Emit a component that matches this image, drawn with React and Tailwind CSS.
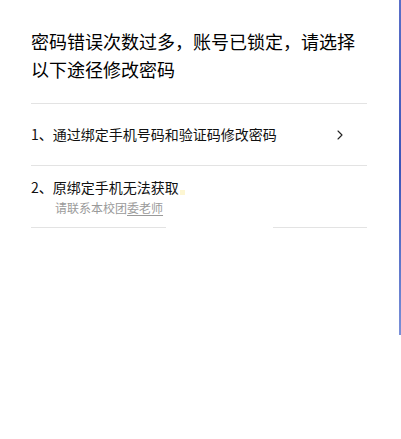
import React from "react";
import { ChevronRight } from "lucide-react";

export default function App() {
  return (
    <div
      className="flex w-[401px] h-[439px] bg-white"
      style={{ fontFamily: '"Microsoft YaHei", "Noto Sans CJK SC", "Noto Sans", sans-serif' }}
    >
      <div className="w-[399px] px-[31px] pr-[32px]">
        {/* Title */}
        <h1 className="pt-[27px] text-[18px] leading-[28px] text-black font-normal">
          密码错误次数过多，账号已锁定，请选择以下途径修改密码
        </h1>

        <div className="mt-[20px] border-t border-[#e3e3e3]" />

        {/* Option 1 */}
        <div className="flex items-center justify-between h-[61px] text-[14px] text-[#111]">
          <span>1、通过绑定手机号码和验证码修改密码</span>
          <ChevronRight size={16} strokeWidth={1.6} className="mr-[19px] text-[#222]" />
        </div>

        <div className="border-t border-[#e3e3e3]" />

        {/* Option 2 */}
        <div className="h-[61px] pt-[11px]">
          <div className="flex items-center text-[14px] leading-[20px] text-[#111]">
            2、原绑定手机无法获取
            <span className="ml-[1px] mt-[10px] w-[5px] h-[5px] bg-[#fdf6d2]" />
          </div>
          <div className="pl-[24px] mt-[2px] text-[12px] leading-[18px] text-[#9a9a9a]">
            请联系本校团<span className="underline underline-offset-2 pr-[3px]">委老师</span>
          </div>
        </div>

        <div className="flex justify-between">
          <div className="w-[135px] border-t border-[#e3e3e3]" />
          <div className="w-[94px] border-t border-[#e3e3e3]" />
        </div>
      </div>
      <div className="w-[2px] h-[335px] bg-gradient-to-b from-[#5a6fc8] via-[#3d55b8] to-[#7a90d8]" />
    </div>
  );
}
